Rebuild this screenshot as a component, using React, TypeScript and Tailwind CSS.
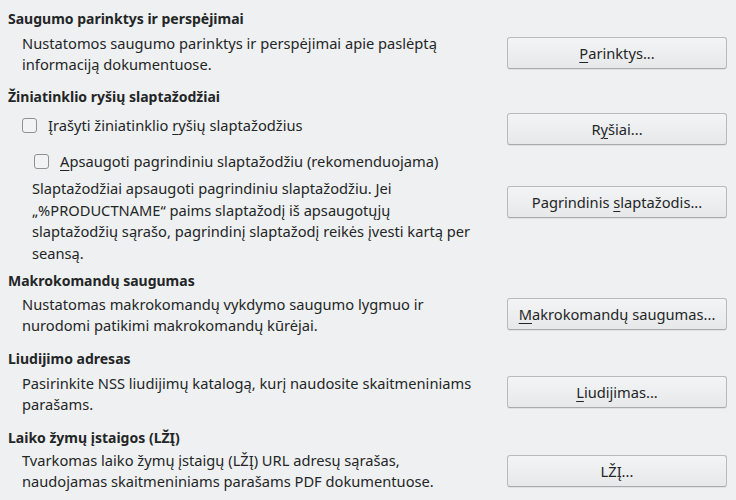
import type { ReactNode } from 'react';

function Mn({ children }: { children: ReactNode }) {
  return <span className="underline underline-offset-[3px] decoration-1">{children}</span>;
}

function Button({ children, className = '' }: { children: ReactNode; className?: string }) {
  return (
    <button
      type="button"
      className={`w-[220px] h-[32px] shrink-0 rounded-[3px] border border-[#b9babb] border-b-[#a9aaab] bg-gradient-to-b from-[#f3f4f5] to-[#e7e8e9] text-[14.67px] text-[#232627] shadow-[0_1px_0_rgba(0,0,0,0.06)] ${className}`}
    >
      {children}
    </button>
  );
}

function Heading({ children, className = '' }: { children: ReactNode; className?: string }) {
  return <h2 className={`pl-[8px] font-bold text-[14px] ${className}`}>{children}</h2>;
}

function Checkbox({ children, className = '' }: { children: ReactNode; className?: string }) {
  return (
    <label className={`flex items-center ${className}`}>
      <span className="w-[15px] h-[15px] rounded-[3px] border border-[#8f9192] bg-[#f2f3f4]" />
      <span className="ml-[11px]">{children}</span>
    </label>
  );
}

export default function App() {
  return (
    <div
      className="w-[736px] h-[500px] overflow-hidden bg-[#eff0f1] text-[#232627] text-[14.67px] leading-[21px] pr-[9px]"
      style={{ fontFamily: '"Noto Sans", "DejaVu Sans", sans-serif' }}
    >
      <Heading className="pt-[8px]">Saugumo parinktys ir perspėjimai</Heading>
      <div className="flex items-start mt-[4px]">
        <p className="flex-1 pl-[22px]">
          Nustatomos saugumo parinktys ir perspėjimai apie paslėptą informaciją dokumentuose.
        </p>
        <Button className="ml-[26px] mt-[4px]">
          <Mn>P</Mn>arinktys...
        </Button>
      </div>

      <Heading className="mt-[11px]">Žiniatinklio ryšių slaptažodžiai</Heading>
      <div className="flex items-start mt-[6px]">
        <div className="flex-1 pl-[22px] pt-[2px]">
          <Checkbox>
            Įrašyti žiniatinklio <Mn>r</Mn>yšių slaptažodžius
          </Checkbox>
          <Checkbox className="mt-[15px] pl-[12px]">
            <Mn>A</Mn>psaugoti pagrindiniu slaptažodžiu (rekomenduojama)
          </Checkbox>
        </div>
        <Button className="ml-[26px]">
          R<Mn>y</Mn>šiai...
        </Button>
      </div>
      <div className="flex items-start mt-[6px]">
        <p className="flex-1 pl-[32px] leading-[21.5px]">
          Slaptažodžiai apsaugoti pagrindiniu slaptažodžiu. Jei „%PRODUCTNAME“ paims slaptažodį iš
          apsaugotųjų
          <br />
          slaptažodžių sąrašo, pagrindinį slaptažodį reikės įvesti kartą per
          <br />
          seansą.
        </p>
        <Button className="ml-[26px] mt-[8px]">
          Pagrindinis <Mn>s</Mn>laptažodis...
        </Button>
      </div>

      <Heading className="mt-[6px]">Makrokomandų saugumas</Heading>
      <div className="flex items-start mt-[3px]">
        <p className="flex-1 pl-[22px]">
          Nustatomas makrokomandų vykdymo saugumo lygmuo ir nurodomi patikimi makrokomandų kūrėjai.
        </p>
        <Button className="ml-[26px] mt-[4px]">
          <Mn>M</Mn>akrokomandų saugumas...
        </Button>
      </div>

      <Heading className="mt-[12px]">Liudijimo adresas</Heading>
      <div className="flex items-start mt-[4px]">
        <p className="flex-1 pl-[22px]">
          Pasirinkite NSS liudijimų katalogą, kurį naudosite skaitmeniniams parašams.
        </p>
        <Button className="ml-[26px] mt-[3px]">
          <Mn>L</Mn>iudijimas...
        </Button>
      </div>

      <Heading className="mt-[12px]">Laiko žymų įstaigos (LŽĮ)</Heading>
      <div className="flex items-start mt-[2px]">
        <p className="flex-1 pl-[22px]">
          Tvarkomas laiko žymų įstaigų (LŽĮ) URL adresų sąrašas, naudojamas skaitmeniniams parašams PDF
          dokumentuose.
        </p>
        <Button className="ml-[26px] mt-[5px]">LŽĮ...</Button>
      </div>
    </div>
  );
}
